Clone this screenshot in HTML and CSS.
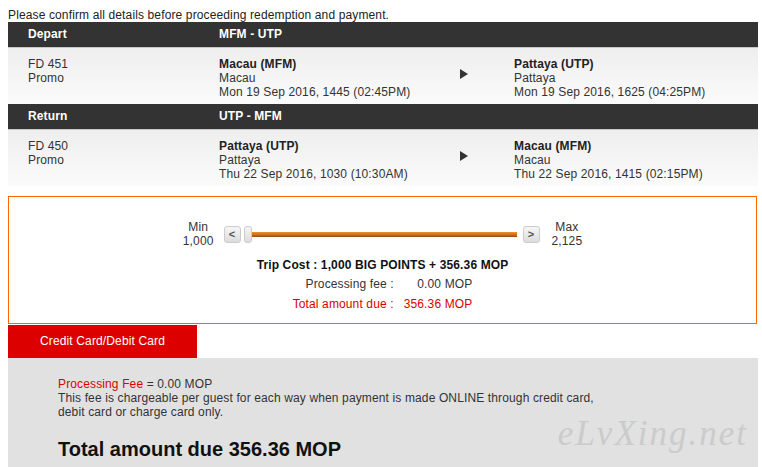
FILE: index.html
```html
<!DOCTYPE html>
<html lang="en">
<head>
  <meta charset="UTF-8">
  <title>Confirm redemption</title>
  <link rel="stylesheet" href="styles.css">
</head>
<body>

  <p class="note">Please confirm all details before proceeding redemption and payment.</p>

  <div class="journey">
    <div class="journey-head">
      <span>Depart</span>
      <span>MFM - UTP</span>
    </div>
    <div class="journey-row">
      <div>FD 451<br>Promo</div>
      <div><b>Macau (MFM)</b><br>Macau<br>Mon 19 Sep 2016, 1445 (02:45PM)</div>
      <div class="arrow"></div>
      <div><b>Pattaya (UTP)</b><br>Pattaya<br>Mon 19 Sep 2016, 1625 (04:25PM)</div>
    </div>
  </div>

  <div class="journey">
    <div class="journey-head">
      <span>Return</span>
      <span>UTP - MFM</span>
    </div>
    <div class="journey-row">
      <div>FD 450<br>Promo</div>
      <div><b>Pattaya (UTP)</b><br>Pattaya<br>Thu 22 Sep 2016, 1030 (10:30AM)</div>
      <div class="arrow"></div>
      <div><b>Macau (MFM)</b><br>Macau<br>Thu 22 Sep 2016, 1415 (02:15PM)</div>
    </div>
  </div>

  <div class="summary">
    <div class="range">
      <div class="range-label">Min<br>1,000</div>
      <div class="slider">
        <span class="slider-btn">&lt;</span>
        <div class="track">
          <span class="handle"></span>
          <span class="bar"></span>
        </div>
        <span class="slider-btn">&gt;</span>
      </div>
      <div class="range-label max">Max<br>2,125</div>
    </div>

    <p class="trip">Trip Cost : 1,000 BIG POINTS + 356.36 MOP</p>

    <table class="fees">
      <tr>
        <td>Processing fee :</td>
        <td>0.00 MOP</td>
      </tr>
      <tr class="due">
        <td>Total amount due :</td>
        <td>356.36 MOP</td>
      </tr>
    </table>
  </div>

  <div class="tabs">
    <div class="tab active">Credit Card/Debit Card</div>
  </div>

  <div class="panel">
    <p class="fee-info"><span class="red">Processing Fee</span> = 0.00 MOP<br>
      This fee is chargeable per guest for each way when payment is made ONLINE through credit card, debit card or charge card only.</p>
    <h2 class="grand">Total amount due 356.36 MOP</h2>
    <span class="watermark">eLvXing.net</span>
  </div>

</body>
</html>
```

FILE: styles.css
```css
body {
  margin: 8px 4px 0 8px;
  font: 12px/14px "Liberation Sans", Arial, sans-serif;
  letter-spacing: 0.13px;
  color: #333;
  background: #fff;
}

.note {
  margin: 0;
  color: #222;
}

/* flight blocks */
.journey-head {
  display: grid;
  grid-template-columns: 191px 1fr;
  height: 25px;
  line-height: 25px;
  background: #333;
  color: #fff;
  font-weight: bold;
  border-bottom: 1px solid #c8c8c8;
}

.journey-head span {
  padding-left: 20px;
}

.journey-row {
  display: grid;
  grid-template-columns: 191px 255px 40px 1fr;
  padding: 9px 0 5px;
  background: linear-gradient(#eeeeee, #fbfbfb);
}

.journey-row > div {
  padding-left: 20px;
}

.journey-row b {
  color: #222;
}

.journey-row .arrow {
  width: 0;
  height: 0;
  padding: 0;
  margin: 12px 0 0 6px;
  border-left: 8px solid #333;
  border-top: 5px solid transparent;
  border-bottom: 5px solid transparent;
}

/* points summary */
.summary {
  margin: 10px 1px 0 0;
  border: 1px solid #f60;
  padding: 23px 0 9px;
  text-align: center;
}

.range {
  display: flex;
  justify-content: center;
  align-items: center;
}

.range-label {
  text-align: center;
  margin-right: 10px;
}

.range-label.max {
  margin: 0 0 0 12px;
}

.slider {
  display: flex;
  align-items: center;
}

.slider-btn {
  width: 15px;
  height: 15px;
  line-height: 15px;
  border: 1px solid #ccc;
  border-radius: 3px;
  background: linear-gradient(#f6f6f6, #dcdcdc);
  color: #555;
  font-weight: bold;
  font-size: 11px;
}

.track {
  display: flex;
  align-items: center;
  width: 273px;
  margin: 0 6px 0 3px;
}

.handle {
  width: 6px;
  height: 15px;
  border: 1px solid #ccc;
  border-radius: 3px;
  background: linear-gradient(#f6f6f6, #dcdcdc);
}

.bar {
  flex: 1;
  height: 5px;
  background: linear-gradient(#f0902e, #c8610f 70%, #8a4a1a);
}

.trip {
  margin: 10px 0 0;
  font-weight: bold;
  color: #111;
}

.fees {
  margin: 2px auto 0;
  border-collapse: collapse;
}

.fees td {
  height: 20px;
  padding: 0;
  text-align: right;
}

.fees td:first-child {
  padding-right: 10px;
}

.fees .due {
  color: #d00;
}

/* payment tabs */
.tabs {
  display: flex;
  margin-top: 1px;
}

.tab {
  position: relative;
  width: 189px;
  height: 33px;
  line-height: 33px;
  text-align: center;
  color: #fff;
}

.tab.active {
  background: #d00;
}

.tab.active::after {
  content: "";
  position: absolute;
  left: 89px;
  bottom: -6px;
  border-top: 6px solid #d00;
  border-left: 6px solid transparent;
  border-right: 6px solid transparent;
}

.panel {
  position: relative;
  background: #e1e1e1;
  padding: 19px 50px 20px;
  min-height: 80px;
}

.fee-info {
  margin: 0;
  width: 560px;
  color: #333;
}

.red {
  color: #d00;
}

.grand {
  margin: 18px 0 0;
  font-size: 20px;
  line-height: 24px;
  letter-spacing: 0;
  color: #111;
}

.watermark {
  position: absolute;
  right: 10px;
  top: 56px;
  font: italic 35px "Liberation Serif", serif;
  letter-spacing: 2px;
  color: #cbcbcb;
}
```
